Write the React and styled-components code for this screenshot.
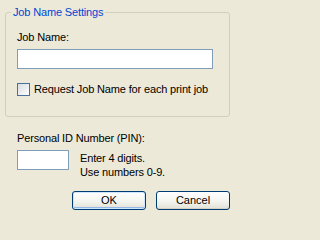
import React from "react";
import styled, { createGlobalStyle } from "styled-components";

const GlobalStyle = createGlobalStyle`
  html, body {
    margin: 0;
    padding: 0;
    background: #ece9d8;
  }
  body {
    font-family: "Liberation Sans", Arial, sans-serif;
    font-size: 11px;
    letter-spacing: -0.15px;
    color: #000;
  }
`;

const Dialog = styled.div`
  width: 234px;
  height: 214px;
  box-sizing: border-box;
  padding: 0 4px 0 5px;
  background: #ece9d8;
  overflow: hidden;
`;

const Group = styled.fieldset`
  box-sizing: border-box;
  width: 225px;
  margin: 6px 0 0;
  min-width: 0;
  padding: 12px 11px 20px;
  border: 1px solid #d0d0bf;
  border-radius: 3px;
`;

const Legend = styled.legend`
  margin-left: -6px;
  padding: 0 2px;
  line-height: 13px;
  color: #0046d5;
`;

const Label = styled.div`
  line-height: 13px;
  white-space: nowrap;
`;

const TextBox = styled.input`
  display: block;
  box-sizing: border-box;
  width: ${(p) => p.$width}px;
  height: 20px;
  margin: ${(p) => p.$top || 0}px 0 0;
  padding: 0 3px;
  border: 1px solid #7f9db9;
  background: #fff;
  font: inherit;
  outline: none;
`;

const CheckRow = styled.label`
  display: flex;
  align-items: center;
  gap: 4px;
  margin-top: 14px;
  line-height: 13px;
  white-space: nowrap;
`;

const CheckBox = styled.span`
  box-sizing: border-box;
  width: 13px;
  height: 13px;
  flex: none;
  border: 1px solid #4a6f9a;
  background: linear-gradient(135deg, #d8dde3 0%, #eef0f1 60%, #ffffff 100%);
`;

const PinSection = styled.div`
  padding: 15px 12px 0;
`;

const PinRow = styled.div`
  display: flex;
  gap: 11px;
  margin-top: 5px;
`;

const Hint = styled.div`
  margin-top: 1px;
  line-height: 14px;
  white-space: nowrap;
`;

const Buttons = styled.div`
  display: flex;
  justify-content: flex-end;
  gap: 10px;
  margin-top: 12px;
`;

const Button = styled.button`
  box-sizing: border-box;
  width: 74px;
  height: 19px;
  padding: 0;
  border: 1px solid #003c74;
  border-radius: 3px;
  background: linear-gradient(#ffffff 0%, #f4f4f0 55%, #e3e1d6 100%);
  box-shadow: ${(p) =>
    p.$default
      ? "inset 0 0 0 1px #cee7ff, inset 0 -1px 0 1px #98b8ea"
      : "inset 0 -1px 0 0 #d6d0c5"};
  font: inherit;
  line-height: 15px;
  color: #000;
`;

export default function App() {
  return (
    <>
      <GlobalStyle />
      <Dialog>
        <Group>
          <Legend>Job Name Settings</Legend>
          <Label>Job Name:</Label>
          <TextBox $width={196} $top={5} />
          <CheckRow>
            <CheckBox />
            Request Job Name for each print job
          </CheckRow>
        </Group>
        <PinSection>
          <Label>Personal ID Number (PIN):</Label>
          <PinRow>
            <TextBox $width={52} />
            <Hint>
              Enter 4 digits.
              <br />
              Use numbers 0-9.
            </Hint>
          </PinRow>
        </PinSection>
        <Buttons>
          <Button $default>OK</Button>
          <Button>Cancel</Button>
        </Buttons>
      </Dialog>
    </>
  );
}
